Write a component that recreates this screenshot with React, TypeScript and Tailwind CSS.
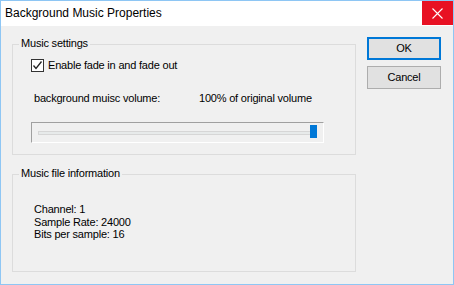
import React from "react";

const font = { fontFamily: '"Liberation Sans", Arial, sans-serif' };

function Group({ title, className, children }: { title: string; className: string; children?: React.ReactNode }) {
  return (
    <div className={"relative border border-[#dcdcdc] " + className}>
      <div className="absolute left-[6px] -top-[8px] bg-[#f0f0f0] px-[2px] text-[11px] leading-[13px] tracking-[-0.2px] text-black">
        {title}
      </div>
      {children}
    </div>
  );
}

export default function App() {
  return (
    <div
      className="w-[454px] h-[285px] border border-[#8ec6f4] bg-[#f0f0f0] flex flex-col text-black tracking-[-0.2px]"
      style={font}
    >
      <div className="h-[25px] bg-white flex items-start shrink-0">
        <div className="flex-1 pl-[4px] pt-[5px] text-[12px] leading-[15px] tracking-normal text-black">
          Background Music Properties
        </div>
        <div className="w-[31px] h-[24px] bg-[#e81123] flex items-center justify-center">
          <svg width="11" height="11" viewBox="0 0 11 11">
            <path d="M0.5 0.5 L10.5 10.5 M10.5 0.5 L0.5 10.5" stroke="white" strokeWidth="1.1" />
          </svg>
        </div>
      </div>
      <div className="flex-1 flex pl-[11px] pt-[11px]">
        <div className="w-[344px] pt-[7px] flex flex-col">
          <Group title="Music settings" className="h-[111px] pl-[18px] pt-[14px]">
            <div className="flex items-center h-[13px]">
              <div className="w-[13px] h-[13px] border border-[#333333] bg-white flex items-center justify-center">
                <svg width="11" height="11" viewBox="0 0 11 11">
                  <path d="M1.5 5.5 L4 8.5 L9.5 1.5" stroke="#222" strokeWidth="1.3" fill="none" />
                </svg>
              </div>
              <span className="ml-[4px] text-[11px] leading-[13px]">Enable fade in and fade out</span>
            </div>
            <div className="flex mt-[20px] ml-[3px] text-[11px] leading-[13px]">
              <span className="w-[165px]">background muisc volume:</span>
              <span>100% of original volume</span>
            </div>
            <div className="mt-[17px] w-[293px] h-[21px] border-t border-l border-[#a0a0a0] border-b-white border-r-white border-b border-r relative flex items-center">
              <div className="ml-[6px] w-[278px] h-[4px] border border-[#d6d6d6] bg-[#e7eaea]" />
              <div className="absolute left-[278px] top-[2px] w-[7px] h-[13px] bg-[#0078d7]" />
            </div>
          </Group>
          <Group title="Music file information" className="mt-[19px] h-[98px] pl-[21px] pt-[28px]">
            <div className="text-[11px] leading-[12.5px]">
              <div>Channel: 1</div>
              <div>Sample Rate: 24000</div>
              <div>Bits per sample: 16</div>
            </div>
          </Group>
        </div>
        <div className="ml-[11px] flex flex-col gap-[6px]">
          <button className="w-[74px] h-[23px] border-2 border-[#0078d7] bg-[#e1e1e1] text-[11px] leading-[13px] flex items-center justify-center">
            OK
          </button>
          <button className="w-[74px] h-[23px] border border-[#adadad] bg-[#e1e1e1] text-[11px] leading-[13px] flex items-center justify-center">
            Cancel
          </button>
        </div>
      </div>
    </div>
  );
}
